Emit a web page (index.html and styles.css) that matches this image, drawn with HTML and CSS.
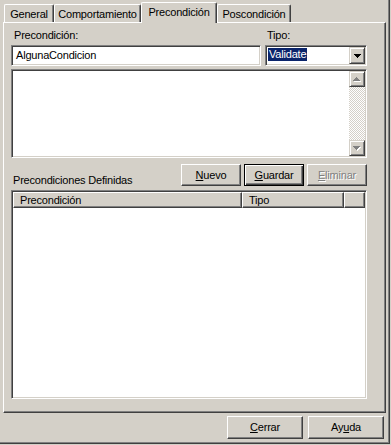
FILE: index.html
```html
<!DOCTYPE html>
<html lang="es">

<head>
  <meta charset="UTF-8">
  <meta name="viewport" content="width=device-width, initial-scale=1.0">
  <title>Precondiciones</title>
  <link rel="stylesheet" href="styles.css">
</head>

<body>
  <div class="dialog">
    <div class="tabs">
      <div class="tab tab--general">General</div>
      <div class="tab tab--behaviour">Comportamiento</div>
      <div class="tab tab--active">Precondición</div>
      <div class="tab tab--post">Poscondición</div>
    </div>

    <div class="panel">
      <div class="fields">
        <div class="field field--name">
          <label class="field__label" for="name">Precondición:</label>
          <div class="textbox sunken" id="name">AlgunaCondicion</div>
        </div>
        <div class="field field--type">
          <label class="field__label" for="type">Tipo:</label>
          <div class="combo sunken" id="type">
            <span class="combo__value"><span class="combo__selected">Validate</span></span>
            <span class="combo__button raised">
              <svg width="7" height="4" viewBox="0 0 7 4" shape-rendering="crispEdges">
                <path d="M0 0h7v1H0zM1 1h5v1H1zM2 2h3v1H2zM3 3h1v1H3z" fill="#000" />
              </svg>
            </span>
          </div>
        </div>
      </div>

      <div class="memo sunken">
        <div class="memo__text"></div>
        <div class="scrollbar">
          <div class="scrollbar__btn raised">
            <svg width="8" height="5" viewBox="0 0 8 5" shape-rendering="crispEdges">
              <path d="M4 1h1v1H4zM3 2h3v1H3zM2 3h5v1H2zM1 4h7v1H1z" fill="#fff" />
              <path d="M3 0h1v1H3zM2 1h3v1H2zM1 2h5v1H1zM0 3h7v1H0z" fill="#808080" />
            </svg>
          </div>
          <div class="scrollbar__track"></div>
          <div class="scrollbar__btn raised">
            <svg width="8" height="5" viewBox="0 0 8 5" shape-rendering="crispEdges">
              <path d="M1 1h7v1H1zM2 2h5v1H2zM3 3h3v1H3zM4 4h1v1H4z" fill="#fff" />
              <path d="M0 0h7v1H0zM1 1h5v1H1zM2 2h3v1H2zM3 3h1v1H3z" fill="#808080" />
            </svg>
          </div>
        </div>
      </div>

      <div class="actions">
        <span class="actions__label">Precondiciones Definidas</span>
        <button class="btn" type="button"><u>N</u>uevo</button>
        <button class="btn btn--default" type="button"><u>G</u>uardar</button>
        <button class="btn" type="button" disabled><u>E</u>liminar</button>
      </div>

      <div class="listview sunken">
        <div class="listview__header">
          <div class="col col--name">Precondición</div>
          <div class="col col--type">Tipo</div>
          <div class="col col--fill"></div>
        </div>
        <div class="listview__body"></div>
      </div>
    </div>

    <div class="footer">
      <button class="btn btn--wide" type="button"><u>C</u>errar</button>
      <button class="btn btn--wide" type="button">Ay<u>u</u>da</button>
    </div>
  </div>
</body>

</html>
```

FILE: styles.css
```css
html,
body {
  margin: 0;
}

body {
  background: #d4d0c8;
  color: #000;
  font: 11px/13px "Liberation Sans", Arial, sans-serif;
  letter-spacing: -0.2px;
}

.dialog {
  display: flex;
  flex-direction: column;
  box-sizing: border-box;
  width: 390px;
  height: 444px;
  padding: 2px 0 0 3px;
  border-right: 1px solid #404040;
  border-bottom: 1px solid #404040;
  box-shadow: inset -1px -1px #808080;
}

/* bevels */
.sunken {
  box-sizing: border-box;
  border: 1px solid;
  border-color: #808080 #fff #fff #808080;
  box-shadow: inset 1px 1px #404040, inset -1px -1px #d4d0c8;
  padding: 1px;
  background: #fff;
}

.raised {
  box-sizing: border-box;
  border: 1px solid;
  border-color: #d4d0c8 #404040 #404040 #d4d0c8;
  box-shadow: inset 1px 1px #fff, inset -1px -1px #808080;
  background: #d4d0c8;
}

/* tabs */
.tabs {
  display: flex;
  align-items: flex-end;
  height: 20px;
  padding-left: 1px;
}

.tab {
  box-sizing: border-box;
  height: 18px;
  padding-top: 3px;
  text-align: center;
  white-space: nowrap;
  border: 1px solid;
  border-color: #fff #404040 transparent #fff;
  border-bottom: 0;
  border-radius: 2px 2px 0 0;
  box-shadow: inset -1px 0 #808080;
}

.tab--general {
  width: 50px;
}

.tab--behaviour {
  width: 87px;
}

.tab--active {
  position: relative;
  z-index: 1;
  width: 76px;
  height: 21px;
  margin-bottom: -1px;
  background: #d4d0c8;
}

.tab--post {
  width: 74px;
}

.panel {
  display: flex;
  flex-direction: column;
  box-sizing: border-box;
  width: 383px;
  height: 391px;
  padding: 6px 18px 13px 7px;
  border: 1px solid;
  border-color: #fff #404040 #404040 #fff;
  box-shadow: inset -1px -1px #808080;
}

/* top fields */
.fields {
  display: flex;
  gap: 4px;
}

.field {
  display: flex;
  flex-direction: column;
  gap: 3px;
}

.field--name {
  width: 250px;
}

.field--name .field__label {
  padding-left: 3px;
}

.field--type {
  width: 102px;
}

.field--type .field__label {
  padding-left: 2px;
}

.textbox {
  height: 21px;
  padding: 3px 4px;
  white-space: nowrap;
}

.combo {
  display: flex;
  height: 21px;
}

.combo__value {
  flex: 1;
  padding: 1px 0 0 1px;
}

.combo__selected {
  display: inline-block;
  padding: 0 1px;
  background: #0a246a;
  color: #fff;
}

.combo__button {
  display: flex;
  align-items: center;
  justify-content: center;
  width: 16px;
  height: 17px;
}

/* memo */
.memo {
  display: flex;
  height: 89px;
  margin-top: 3px;
}

.memo__text {
  flex: 1;
}

.scrollbar {
  display: flex;
  flex-direction: column;
  width: 16px;
}

.scrollbar__btn {
  display: flex;
  align-items: center;
  justify-content: center;
  height: 16px;
}

.scrollbar__track {
  flex: 1;
  background: repeating-conic-gradient(#fff 0 25%, #d4d0c8 0 50%) 0 0 / 2px 2px;
}

/* buttons */
.actions {
  display: flex;
  gap: 3px;
  height: 22px;
  margin-top: 6px;
}

.actions__label {
  flex: 1;
  align-self: flex-end;
  margin-bottom: -1px;
  padding-left: 2px;
}

.btn {
  box-sizing: border-box;
  width: 60px;
  height: 22px;
  padding: 0;
  font: inherit;
  letter-spacing: inherit;
  color: #000;
  background: #d4d0c8;
  border: 1px solid;
  border-color: #fff #404040 #404040 #fff;
  border-radius: 0;
  box-shadow: inset -1px -1px #808080;
}

.btn u {
  text-underline-offset: 1px;
}

.btn--default {
  border-color: #000;
  box-shadow: inset 1px 1px #fff, inset -1px -1px #404040, inset -2px -2px #808080;
}

.btn:disabled {
  color: #808080;
  text-shadow: 1px 1px #fff;
}

.btn--wide {
  width: 76px;
  height: 23px;
}

/* list */
.listview {
  display: flex;
  flex-direction: column;
  flex: 1;
  margin-top: 4px;
}

.listview__header {
  display: flex;
  height: 16px;
}

.col {
  box-sizing: border-box;
  padding: 1px 0 0 6px;
  white-space: nowrap;
  background: #d4d0c8;
  border: 1px solid;
  border-color: #fff #404040 #404040 #fff;
  box-shadow: inset -1px -1px #808080;
}

.col--name {
  width: 229px;
}

.col--type {
  width: 102px;
}

.col--fill {
  flex: 1;
}

.listview__body {
  flex: 1;
}

.footer {
  display: flex;
  justify-content: flex-end;
  gap: 5px;
  margin-top: 3px;
  padding-right: 5px;
}
```
